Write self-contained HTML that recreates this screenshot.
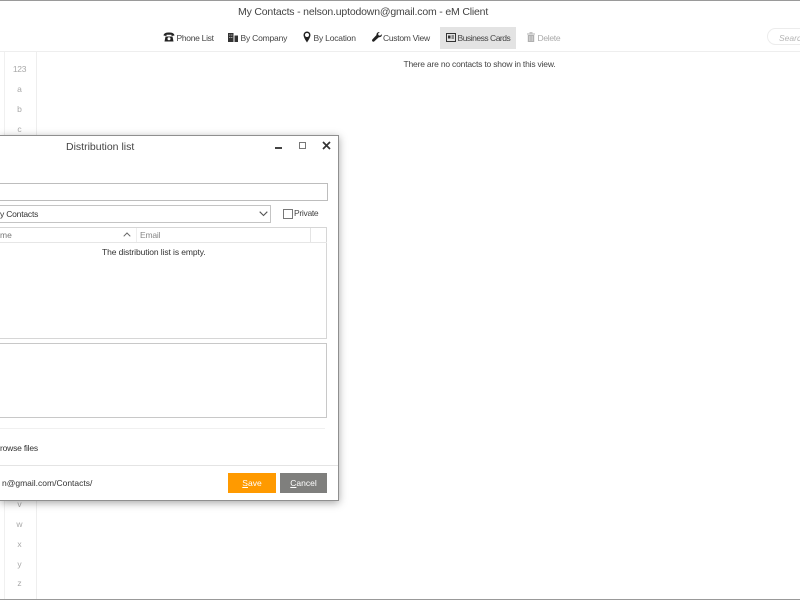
<!DOCTYPE html>
<html>
<head>
<meta charset="utf-8">
<style>
html,body{margin:0;padding:0;width:800px;height:600px;overflow:hidden;background:#fff;font-family:"Liberation Sans",sans-serif;color:#333}
#w{position:absolute;left:0;top:0;width:800px;height:600px;overflow:hidden;filter:blur(.3px)}
.a{position:absolute;white-space:nowrap}
.t{font-size:8.5px;line-height:12px;color:#444}
.alpha{position:absolute;left:4px;width:31px;text-align:center;font-size:8.5px;color:#a8a8a8;line-height:12px}
svg{position:absolute}
</style>
</head>
<body>
<div id="w">
<div class="a" style="left:0;top:0;width:800px;height:1px;background:#9a9a9a"></div>
<div class="a" style="left:0;top:599px;width:800px;height:1px;background:#999"></div>
<div class="a" style="left:238px;top:4.500px;font-size:10.5px;line-height:15px;color:#444;letter-spacing:-.18px">My Contacts - nelson.uptodown@gmail.com - eM Client</div>

<!-- toolbar -->
<div class="a" style="left:0;top:51px;width:800px;height:1px;background:#eeeeee"></div>
<div class="a" style="left:440px;top:27px;width:76px;height:22px;background:#e3e3e3"></div>

<svg style="left:163px;top:32px" width="12" height="10" viewBox="0 0 12 10"><path d="M0.5 3.5C1 1 3 .5 6 .5s5 .5 5.500 3l-3 .5V2.800H3.500V4zM2.500 4.500h7l1 5h-9zM6 5.300a1.500 1.500 0 100 3 1.500 1.500 0 000-3z" fill="#222" fill-rule="evenodd"/></svg>
<div class="a t" style="left:176.500px;top:32px;letter-spacing:-.3px">Phone List</div>

<svg style="left:228px;top:32px" width="10" height="10" viewBox="0 0 10 10"><path d="M0 1h5.500v9H0zM6.500 3.500H10V10H6.500z" fill="#333"/><path d="M1.300 2.500h1v1h-1zM3.300 2.500h1v1h-1zM1.300 5h1v1h-1zM3.300 5h1v1h-1z" fill="#ccc"/></svg>
<div class="a t" style="left:240.500px;top:32px;letter-spacing:-.2px">By Company</div>

<svg style="left:303px;top:31px" width="8" height="12" viewBox="0 0 8 12"><path d="M4 .5A3.500 3.500 0 00.5 4C.5 6.500 4 11.500 4 11.500S7.500 6.500 7.500 4A3.500 3.500 0 004 .5zM4 2a2 2 0 110 4 2 2 0 010-4z" fill="#222" fill-rule="evenodd"/></svg>
<div class="a t" style="left:313.500px;top:32px;letter-spacing:-.2px">By Location</div>

<svg style="left:372px;top:32px" width="10" height="10" viewBox="0 0 10 10"><path d="M9.800 2.200L8 3.800 6.500 3.300 6 1.800 7.700.2C6 -.3 4.300 1 4.500 3L.4 7.400c-.6.700-.4 1.500.1 2 .5.400 1.300.5 1.900-.1L6.800 5.200C8.800 5.500 10.300 4 9.800 2.200z" fill="#222"/></svg>
<div class="a t" style="left:383px;top:32px;letter-spacing:-.28px">Custom View</div>

<svg style="left:446px;top:33px" width="10" height="9" viewBox="0 0 10 9"><rect x=".5" y=".5" width="9" height="8" fill="#e3e3e3" stroke="#333"/><path d="M2 2.500h2.500v3H2zM5.500 2.500H8v1H5.500zM5.500 4.500H8v1H5.500z" fill="#333"/></svg>
<div class="a t" style="left:457.500px;top:32px;letter-spacing:-.48px">Business Cards</div>

<svg style="left:527px;top:32px" width="8" height="10" viewBox="0 0 8 10"><path d="M0 1.500h8v1H0zM2.500.3h3v1h-3zM.8 3h6.400v7H.8z" fill="#b0b0b0"/><path d="M2.500 4v5M4 4v5M5.500 4v5" stroke="#e8e8e8" stroke-width=".5"/></svg>
<div class="a t" style="left:537.500px;top:32px;color:#aaa;letter-spacing:-.3px">Delete</div>

<div class="a" style="left:767px;top:28px;width:33px;height:17px;border:1px solid #ececec;border-right:none;border-radius:9px 0 0 9px;box-sizing:border-box"></div>
<div class="a" style="left:779px;top:32px;font-size:8.500px;line-height:12px;font-style:italic;color:#b5b5b5">Searc</div>

<div class="a t" style="left:403.500px;top:58px;letter-spacing:-.19px">There are no contacts to show in this view.</div>

<!-- alpha sidebar -->
<div class="a" style="left:4px;top:52px;width:1px;height:547px;background:#f0f0f0"></div>
<div class="a" style="left:36px;top:52px;width:1px;height:547px;background:#eeeeee"></div>
<div class="alpha" style="top:63px;letter-spacing:-.3px">123</div>
<div class="alpha" style="top:83px">a</div>
<div class="alpha" style="top:103px">b</div>
<div class="alpha" style="top:123px">c</div>
<div class="alpha" style="top:498px">v</div>
<div class="alpha" style="top:518px">w</div>
<div class="alpha" style="top:538px">x</div>
<div class="alpha" style="top:558px">y</div>
<div class="alpha" style="top:577px">z</div>

<!-- dialog -->
<div class="a" style="left:0;top:135px;width:339px;height:366px;box-sizing:border-box;background:#fff;border:1px solid #8f8f8f;border-left:none;box-shadow:0 2px 8px rgba(0,0,0,.35)"></div>
<div class="a" style="left:66px;top:140px;font-size:10.500px;line-height:14px;color:#444">Distribution list</div>
<div class="a" style="left:275px;top:147px;width:7px;height:2px;background:#444"></div>
<div class="a" style="left:299px;top:142px;width:7px;height:7px;box-sizing:border-box;border:1px solid #777"></div>
<svg style="left:322px;top:141px" width="9" height="9" viewBox="0 0 9 9"><path d="M1 1l7 7M8 1L1 8" stroke="#333" stroke-width="1.700"/></svg>

<div class="a" style="left:0;top:183px;width:328px;height:18px;box-sizing:border-box;border:1px solid #bdbdbd;border-left:none"></div>
<div class="a" style="left:0;top:205px;width:271px;height:18px;box-sizing:border-box;border:1px solid #c4c4c4;border-left:none"></div>
<div class="a t" style="left:0;top:208px;color:#333;letter-spacing:-.2px">y Contacts</div>
<svg style="left:259px;top:211px" width="9" height="6" viewBox="0 0 9 6"><path d="M.7 .7L4.500 4.500 8.300 .7" fill="none" stroke="#555" stroke-width="1.100"/></svg>
<div class="a" style="left:283px;top:209px;width:10px;height:10px;box-sizing:border-box;border:1px solid #777"></div>
<div class="a t" style="left:294px;top:207px;letter-spacing:-.3px">Private</div>

<!-- list -->
<div class="a" style="left:0;top:227px;width:327px;height:112px;box-sizing:border-box;border:1px solid #d6d6d6;border-left:none"></div>
<div class="a" style="left:0;top:242px;width:327px;height:1px;background:#e6e6e6"></div>
<div class="a" style="left:136px;top:228px;width:1px;height:14px;background:#eee"></div>
<div class="a" style="left:310px;top:228px;width:1px;height:14px;background:#e4e4e4"></div>
<div class="a t" style="left:0;top:229px;color:#777">me</div>
<svg style="left:123px;top:232px" width="8" height="5" viewBox="0 0 8 5"><path d="M.7 4.300L4 1l3.300 3.300" fill="none" stroke="#666" stroke-width="1"/></svg>
<div class="a t" style="left:140px;top:229px;color:#888;letter-spacing:-.2px">Email</div>
<div class="a t" style="left:102px;top:246px;color:#333;letter-spacing:-.1px">The distribution list is empty.</div>

<!-- notes -->
<div class="a" style="left:0;top:343px;width:327px;height:75px;box-sizing:border-box;border:1px solid #c8c8c8;border-left:none"></div>
<div class="a" style="left:0;top:428px;width:325px;height:1px;background:#f0f0f0"></div>
<div class="a t" style="left:0;top:442px;color:#333;letter-spacing:-.2px">rowse files</div>
<div class="a" style="left:0;top:465px;width:338px;height:1px;background:#e4e4e4"></div>
<div class="a t" style="left:2px;top:477px;color:#333">n@gmail.com/Contacts/</div>
<div class="a" style="left:228px;top:473px;width:48px;height:20px;background:#ff9a00;color:#fff;font-size:8.500px;line-height:21px;text-align:center"><u>S</u>ave</div>
<div class="a" style="left:280px;top:473px;width:47px;height:20px;background:#7f7f7d;color:#fff;font-size:8.500px;line-height:21px;text-align:center"><u>C</u>ancel</div>
</div>
</body>
</html>
